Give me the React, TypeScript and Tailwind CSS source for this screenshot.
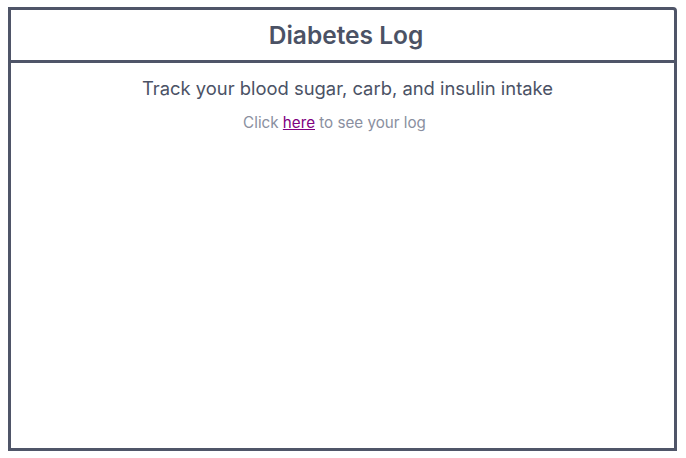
import React from "react";

export default function App() {
  return (
    <div className="w-[686px] h-[458px] bg-white pt-[7px] pl-[8px]" style={{ fontFamily: "Inter, 'Liberation Sans', sans-serif" }}>
      <div className="w-[669px] h-[444px] border-[3px] border-[#4f5568] rounded-tr-[4px] flex flex-col">
        <div className="h-[53px] border-b-[3px] border-[#4f5568] flex items-center justify-center">
          <h1 className="ml-[7px] text-[24.5px] font-semibold text-[#4b5265] leading-none">Diabetes Log</h1>
        </div>
        <div className="flex flex-col items-center pt-[14px]">
          <p className="ml-[10px] text-[18.4px] text-[#4b5265] leading-[22px]">Track your blood sugar, carb, and insulin intake</p>
          <p className="mt-[14px] mr-[16px] text-[15.2px] text-[#8a8fa0] leading-[20px]">
            Click <a href="#" className="text-[#800080] underline">here</a> to see your log
          </p>
        </div>
      </div>
    </div>
  );
}
